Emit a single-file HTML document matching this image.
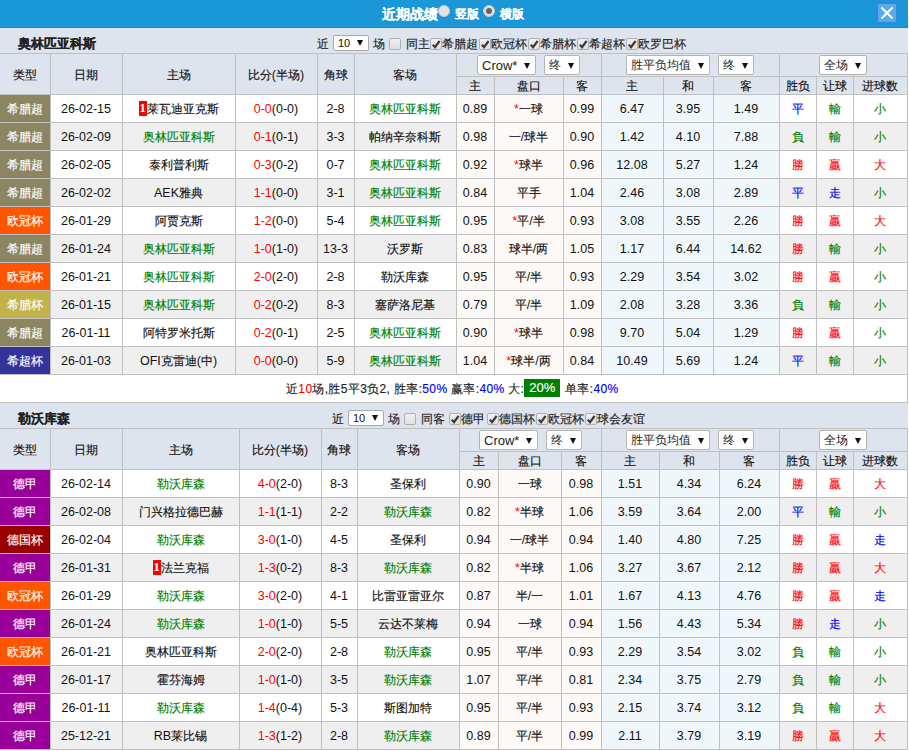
<!DOCTYPE html>
<html><head><meta charset="utf-8"><style>
html,body{margin:0;padding:0;background:#fff;}
body{width:909px;height:751px;overflow:hidden;position:relative;font-family:"Liberation Sans",sans-serif;font-size:12px;color:#111;}
body>div,body>svg{position:absolute;}
.n{font-size:12.5px;-webkit-text-stroke:0;}
.t{-webkit-text-stroke:0.15px currentColor;}
.t{text-align:center;white-space:nowrap;overflow:visible;}
.rk{font-style:normal;background:#ff0000;color:#fff;display:inline-block;width:8px;height:15px;line-height:15px;text-align:center;font-weight:bold;vertical-align:middle;margin-top:-2px;font-family:"Liberation Serif",serif;font-size:12px;}
.sel{height:18px;line-height:19px;background:#fff;border:1px solid #b4b4b4;border-radius:2px;font-size:12px;color:#222;white-space:nowrap;}
.sel span{position:absolute;left:4px;top:0;}
.tri{position:absolute;right:5px;top:7px;width:0;height:0;border-left:3.5px solid transparent;border-right:3.5px solid transparent;border-top:6px solid #111;}
.ssel{position:absolute;width:34px;height:14px;line-height:15px;background:#fff;border:1px solid #a9a9a9;border-radius:2px;font-size:11px;color:#111;white-space:nowrap;}
.ssel span{position:absolute;left:4px;top:0;}
.ssel .tri{right:5px;top:4px;}
.cb{width:10px;height:10px;border:1px solid #b0b0b0;border-radius:2px;background:linear-gradient(#f0f0f0,#e0e0e0);}
.cb svg{position:absolute;left:0;top:0;}
.radio{width:12px;height:12px;border-radius:50%;background:#e2e2e2;border:1px solid #c8c8c8;box-sizing:border-box;}
.radio.on i{position:absolute;left:2px;top:2px;width:6px;height:6px;border-radius:50%;background:#666;}
.big{background:#008000;color:#fff;padding:1px 5px 2px 5px;font-size:13px;display:inline-block;line-height:15px;letter-spacing:0;margin:0 1px 0 0;position:relative;top:-1px;}
</style></head><body>
<div style="left:0px;top:0px;width:908px;height:27px;background:#1b96d6;"></div>
<div style="left:0px;top:27px;width:908px;height:1px;background:#0a8dd3;"></div>
<div style="left:0px;top:28px;width:908px;height:1px;background:#e6e9ee;"></div>
<div class="t" style="left:382px;top:1px;width:60px;height:27px;line-height:27px;font-weight:bold;font-size:14px;color:#fff;text-align:left;">近期战绩</div>
<div class="radio" style="left:438px;top:5px"></div>
<div class="t" style="left:455px;top:1px;width:30px;height:27px;line-height:27px;color:#fff;text-align:left;font-weight:bold;">竖版</div>
<div class="radio on" style="left:483px;top:5px"><i></i></div>
<div class="t" style="left:500px;top:1px;width:30px;height:27px;line-height:27px;color:#fff;text-align:left;font-weight:bold;">横版</div>
<div style="left:876px;top:2px;width:22px;height:22px;background:#2d8ae2;"></div>
<div style="left:878px;top:4px;width:18px;height:18px;background:#5aaae9;"></div>
<svg style="position:absolute;left:876px;top:2px" width="22" height="22" viewBox="0 0 22 22"><path d="M5.5 5.5 L16.5 16.5 M16.5 5.5 L5.5 16.5" stroke="#fff" stroke-width="2" fill="none"/></svg>
<div style="left:0px;top:28px;width:908px;height:25px;background:#dee4ed;"></div>
<div class="t" style="left:18px;top:31px;width:200px;height:25px;line-height:25px;font-weight:bold;font-size:13px;color:#222;text-align:left;">奥林匹亚科斯</div>
<div class="t" style="left:317px;top:32px;width:16px;height:25px;line-height:25px;text-align:left;color:#222;">近</div>
<div class="ssel" style="left:333px;top:35px"><span>10</span><i class="tri"></i></div>
<div class="t" style="left:373px;top:32px;width:16px;height:25px;line-height:25px;text-align:left;color:#222;">场</div>
<div class="cb" style="left:389px;top:38px"></div>
<div class="t" style="left:406px;top:32px;width:28px;height:25px;line-height:25px;text-align:left;color:#222;">同主</div>
<div class="cb ck" style="left:430px;top:38px"><svg width="11" height="11" viewBox="0 0 11 11"><path d="M1.8 5.6 L4.0 8.2 L8.6 2.0" stroke="#3a3a3a" stroke-width="2.2" fill="none"/></svg></div>
<div class="t" style="left:442px;top:32px;width:40px;height:25px;line-height:25px;text-align:left;color:#222;">希腊超</div>
<div class="cb ck" style="left:479px;top:38px"><svg width="11" height="11" viewBox="0 0 11 11"><path d="M1.8 5.6 L4.0 8.2 L8.6 2.0" stroke="#3a3a3a" stroke-width="2.2" fill="none"/></svg></div>
<div class="t" style="left:491px;top:32px;width:40px;height:25px;line-height:25px;text-align:left;color:#222;">欧冠杯</div>
<div class="cb ck" style="left:528px;top:38px"><svg width="11" height="11" viewBox="0 0 11 11"><path d="M1.8 5.6 L4.0 8.2 L8.6 2.0" stroke="#3a3a3a" stroke-width="2.2" fill="none"/></svg></div>
<div class="t" style="left:540px;top:32px;width:40px;height:25px;line-height:25px;text-align:left;color:#222;">希腊杯</div>
<div class="cb ck" style="left:577px;top:38px"><svg width="11" height="11" viewBox="0 0 11 11"><path d="M1.8 5.6 L4.0 8.2 L8.6 2.0" stroke="#3a3a3a" stroke-width="2.2" fill="none"/></svg></div>
<div class="t" style="left:589px;top:32px;width:40px;height:25px;line-height:25px;text-align:left;color:#222;">希超杯</div>
<div class="cb ck" style="left:626px;top:38px"><svg width="11" height="11" viewBox="0 0 11 11"><path d="M1.8 5.6 L4.0 8.2 L8.6 2.0" stroke="#3a3a3a" stroke-width="2.2" fill="none"/></svg></div>
<div class="t" style="left:638px;top:32px;width:52px;height:25px;line-height:25px;text-align:left;color:#222;">欧罗巴杯</div>
<div style="left:0px;top:53px;width:908px;height:41px;background:#dee4ed;"></div>
<div style="left:0px;top:53px;width:908px;height:1px;background:#c0c0c0;"></div>
<div style="left:0px;top:94px;width:908px;height:1px;background:#c0c0c0;"></div>
<div style="left:50px;top:53px;width:1px;height:41px;background:#c0c0c0;"></div>
<div style="left:122px;top:53px;width:1px;height:41px;background:#c0c0c0;"></div>
<div style="left:235px;top:53px;width:1px;height:41px;background:#c0c0c0;"></div>
<div style="left:317px;top:53px;width:1px;height:41px;background:#c0c0c0;"></div>
<div style="left:354px;top:53px;width:1px;height:41px;background:#c0c0c0;"></div>
<div style="left:456px;top:53px;width:1px;height:41px;background:#c0c0c0;"></div>
<div style="left:601px;top:53px;width:1px;height:41px;background:#c0c0c0;"></div>
<div style="left:779px;top:53px;width:1px;height:41px;background:#c0c0c0;"></div>
<div style="left:456px;top:76px;width:452px;height:1px;background:#c0c0c0;"></div>
<div style="left:494px;top:76px;width:1px;height:18px;background:#c0c0c0;"></div>
<div style="left:563px;top:76px;width:1px;height:18px;background:#c0c0c0;"></div>
<div style="left:663px;top:76px;width:1px;height:18px;background:#c0c0c0;"></div>
<div style="left:713px;top:76px;width:1px;height:18px;background:#c0c0c0;"></div>
<div style="left:816px;top:76px;width:1px;height:18px;background:#c0c0c0;"></div>
<div style="left:853px;top:76px;width:1px;height:18px;background:#c0c0c0;"></div>
<div style="left:907px;top:53px;width:1px;height:42px;background:#c0c0c0;"></div>
<div class="t" style="left:0px;top:55px;width:50px;height:40px;line-height:40px;">类型</div>
<div class="t" style="left:50px;top:55px;width:72px;height:40px;line-height:40px;">日期</div>
<div class="t" style="left:122px;top:55px;width:113px;height:40px;line-height:40px;">主场</div>
<div class="t" style="left:235px;top:55px;width:82px;height:40px;line-height:40px;">比分<span class="n">(</span>半场<span class="n">)</span></div>
<div class="t" style="left:317px;top:55px;width:37px;height:40px;line-height:40px;">角球</div>
<div class="t" style="left:354px;top:55px;width:102px;height:40px;line-height:40px;">客场</div>
<div class="t" style="left:456px;top:78px;width:38px;height:17px;line-height:17px;">主</div>
<div class="t" style="left:494px;top:78px;width:69px;height:17px;line-height:17px;">盘口</div>
<div class="t" style="left:563px;top:78px;width:38px;height:17px;line-height:17px;">客</div>
<div class="t" style="left:601px;top:78px;width:62px;height:17px;line-height:17px;">主</div>
<div class="t" style="left:663px;top:78px;width:50px;height:17px;line-height:17px;">和</div>
<div class="t" style="left:713px;top:78px;width:66px;height:17px;line-height:17px;">客</div>
<div class="t" style="left:779px;top:78px;width:37px;height:17px;line-height:17px;">胜负</div>
<div class="t" style="left:816px;top:78px;width:37px;height:17px;line-height:17px;">让球</div>
<div class="t" style="left:853px;top:78px;width:54px;height:17px;line-height:17px;">进球数</div>
<div class="sel" style="left:477px;top:55px;width:57px;font-size:13px;"><span>Crow*</span><i class="tri"></i></div>
<div class="sel" style="left:544px;top:55px;width:34px;"><span>终</span><i class="tri"></i></div>
<div class="sel" style="left:626px;top:55px;width:82px;"><span>胜平负均值</span><i class="tri"></i></div>
<div class="sel" style="left:718px;top:55px;width:34px;"><span>终</span><i class="tri"></i></div>
<div class="sel" style="left:819px;top:55px;width:46px;"><span>全场</span><i class="tri"></i></div>
<div style="left:0px;top:95px;width:908px;height:27px;background:#ffffff;"></div>
<div style="left:457px;top:95px;width:144px;height:27px;background:#fdf9f6;"></div>
<div style="left:602px;top:95px;width:177px;height:27px;background:#eff7fb;"></div>
<div style="left:0px;top:95px;width:50px;height:27px;background:#8b8661;"></div>
<div class="t" style="left:0px;top:96px;width:50px;height:27px;line-height:27px;color:#fff;">希腊超</div>
<div class="t" style="left:50px;top:96px;width:72px;height:27px;line-height:27px;"><span class="n">26-02-15</span></div>
<div class="t" style="left:122px;top:96px;width:113px;height:27px;line-height:27px;"><i class="rk"><span class="n">1</span></i>莱瓦迪亚克斯</div>
<div class="t" style="left:235px;top:96px;width:82px;height:27px;line-height:27px;"><span style="color:#ff0000"><span class="n">0-0</span></span><span class="n">(0-0)</span></div>
<div class="t" style="left:317px;top:96px;width:37px;height:27px;line-height:27px;"><span class="n">2-8</span></div>
<div class="t" style="left:354px;top:96px;width:102px;height:27px;line-height:27px;"><span style="color:#008000">奥林匹亚科斯</span></div>
<div class="t" style="left:456px;top:96px;width:38px;height:27px;line-height:27px;"><span class="n">0.89</span></div>
<div class="t" style="left:494px;top:96px;width:69px;height:27px;line-height:27px;"><span style="color:#ff0000"><span class="n">*</span></span>一球</div>
<div class="t" style="left:563px;top:96px;width:38px;height:27px;line-height:27px;"><span class="n">0.99</span></div>
<div class="t" style="left:601px;top:96px;width:62px;height:27px;line-height:27px;"><span class="n">6.47</span></div>
<div class="t" style="left:663px;top:96px;width:50px;height:27px;line-height:27px;"><span class="n">3.95</span></div>
<div class="t" style="left:713px;top:96px;width:66px;height:27px;line-height:27px;"><span class="n">1.49</span></div>
<div class="t" style="left:779px;top:96px;width:37px;height:27px;line-height:27px;"><span style="color:#0000ff">平</span></div>
<div class="t" style="left:816px;top:96px;width:37px;height:27px;line-height:27px;"><span style="color:#008000">輸</span></div>
<div class="t" style="left:853px;top:96px;width:54px;height:27px;line-height:27px;"><span style="color:#008000">小</span></div>
<div style="left:0px;top:122px;width:908px;height:1px;background:#c0c0c0;"></div>
<div style="left:50px;top:95px;width:1px;height:27px;background:#c0c0c0;"></div>
<div style="left:122px;top:95px;width:1px;height:27px;background:#c0c0c0;"></div>
<div style="left:235px;top:95px;width:1px;height:27px;background:#c0c0c0;"></div>
<div style="left:317px;top:95px;width:1px;height:27px;background:#c0c0c0;"></div>
<div style="left:354px;top:95px;width:1px;height:27px;background:#c0c0c0;"></div>
<div style="left:456px;top:95px;width:1px;height:27px;background:#c0c0c0;"></div>
<div style="left:494px;top:95px;width:1px;height:27px;background:#c0c0c0;"></div>
<div style="left:563px;top:95px;width:1px;height:27px;background:#c0c0c0;"></div>
<div style="left:601px;top:95px;width:1px;height:27px;background:#c0c0c0;"></div>
<div style="left:663px;top:95px;width:1px;height:27px;background:#c0c0c0;"></div>
<div style="left:713px;top:95px;width:1px;height:27px;background:#c0c0c0;"></div>
<div style="left:779px;top:95px;width:1px;height:27px;background:#c0c0c0;"></div>
<div style="left:816px;top:95px;width:1px;height:27px;background:#c0c0c0;"></div>
<div style="left:853px;top:95px;width:1px;height:27px;background:#c0c0c0;"></div>
<div style="left:907px;top:95px;width:1px;height:27px;background:#c0c0c0;"></div>
<div style="left:0px;top:123px;width:908px;height:27px;background:#efefef;"></div>
<div style="left:457px;top:123px;width:144px;height:27px;background:#fdf9f6;"></div>
<div style="left:602px;top:123px;width:177px;height:27px;background:#eff7fb;"></div>
<div style="left:0px;top:123px;width:50px;height:27px;background:#8b8661;"></div>
<div class="t" style="left:0px;top:124px;width:50px;height:27px;line-height:27px;color:#fff;">希腊超</div>
<div class="t" style="left:50px;top:124px;width:72px;height:27px;line-height:27px;"><span class="n">26-02-09</span></div>
<div class="t" style="left:122px;top:124px;width:113px;height:27px;line-height:27px;"><span style="color:#008000">奥林匹亚科斯</span></div>
<div class="t" style="left:235px;top:124px;width:82px;height:27px;line-height:27px;"><span style="color:#ff0000"><span class="n">0-1</span></span><span class="n">(0-1)</span></div>
<div class="t" style="left:317px;top:124px;width:37px;height:27px;line-height:27px;"><span class="n">3-3</span></div>
<div class="t" style="left:354px;top:124px;width:102px;height:27px;line-height:27px;">帕纳辛奈科斯</div>
<div class="t" style="left:456px;top:124px;width:38px;height:27px;line-height:27px;"><span class="n">0.98</span></div>
<div class="t" style="left:494px;top:124px;width:69px;height:27px;line-height:27px;">一<span class="n">/</span>球半</div>
<div class="t" style="left:563px;top:124px;width:38px;height:27px;line-height:27px;"><span class="n">0.90</span></div>
<div class="t" style="left:601px;top:124px;width:62px;height:27px;line-height:27px;"><span class="n">1.42</span></div>
<div class="t" style="left:663px;top:124px;width:50px;height:27px;line-height:27px;"><span class="n">4.10</span></div>
<div class="t" style="left:713px;top:124px;width:66px;height:27px;line-height:27px;"><span class="n">7.88</span></div>
<div class="t" style="left:779px;top:124px;width:37px;height:27px;line-height:27px;"><span style="color:#008000">負</span></div>
<div class="t" style="left:816px;top:124px;width:37px;height:27px;line-height:27px;"><span style="color:#008000">輸</span></div>
<div class="t" style="left:853px;top:124px;width:54px;height:27px;line-height:27px;"><span style="color:#008000">小</span></div>
<div style="left:0px;top:150px;width:908px;height:1px;background:#c0c0c0;"></div>
<div style="left:50px;top:123px;width:1px;height:27px;background:#c0c0c0;"></div>
<div style="left:122px;top:123px;width:1px;height:27px;background:#c0c0c0;"></div>
<div style="left:235px;top:123px;width:1px;height:27px;background:#c0c0c0;"></div>
<div style="left:317px;top:123px;width:1px;height:27px;background:#c0c0c0;"></div>
<div style="left:354px;top:123px;width:1px;height:27px;background:#c0c0c0;"></div>
<div style="left:456px;top:123px;width:1px;height:27px;background:#c0c0c0;"></div>
<div style="left:494px;top:123px;width:1px;height:27px;background:#c0c0c0;"></div>
<div style="left:563px;top:123px;width:1px;height:27px;background:#c0c0c0;"></div>
<div style="left:601px;top:123px;width:1px;height:27px;background:#c0c0c0;"></div>
<div style="left:663px;top:123px;width:1px;height:27px;background:#c0c0c0;"></div>
<div style="left:713px;top:123px;width:1px;height:27px;background:#c0c0c0;"></div>
<div style="left:779px;top:123px;width:1px;height:27px;background:#c0c0c0;"></div>
<div style="left:816px;top:123px;width:1px;height:27px;background:#c0c0c0;"></div>
<div style="left:853px;top:123px;width:1px;height:27px;background:#c0c0c0;"></div>
<div style="left:907px;top:123px;width:1px;height:27px;background:#c0c0c0;"></div>
<div style="left:0px;top:151px;width:908px;height:27px;background:#ffffff;"></div>
<div style="left:457px;top:151px;width:144px;height:27px;background:#fdf9f6;"></div>
<div style="left:602px;top:151px;width:177px;height:27px;background:#eff7fb;"></div>
<div style="left:0px;top:151px;width:50px;height:27px;background:#8b8661;"></div>
<div class="t" style="left:0px;top:152px;width:50px;height:27px;line-height:27px;color:#fff;">希腊超</div>
<div class="t" style="left:50px;top:152px;width:72px;height:27px;line-height:27px;"><span class="n">26-02-05</span></div>
<div class="t" style="left:122px;top:152px;width:113px;height:27px;line-height:27px;">泰利普利斯</div>
<div class="t" style="left:235px;top:152px;width:82px;height:27px;line-height:27px;"><span style="color:#ff0000"><span class="n">0-3</span></span><span class="n">(0-2)</span></div>
<div class="t" style="left:317px;top:152px;width:37px;height:27px;line-height:27px;"><span class="n">0-7</span></div>
<div class="t" style="left:354px;top:152px;width:102px;height:27px;line-height:27px;"><span style="color:#008000">奥林匹亚科斯</span></div>
<div class="t" style="left:456px;top:152px;width:38px;height:27px;line-height:27px;"><span class="n">0.92</span></div>
<div class="t" style="left:494px;top:152px;width:69px;height:27px;line-height:27px;"><span style="color:#ff0000"><span class="n">*</span></span>球半</div>
<div class="t" style="left:563px;top:152px;width:38px;height:27px;line-height:27px;"><span class="n">0.96</span></div>
<div class="t" style="left:601px;top:152px;width:62px;height:27px;line-height:27px;"><span class="n">12.08</span></div>
<div class="t" style="left:663px;top:152px;width:50px;height:27px;line-height:27px;"><span class="n">5.27</span></div>
<div class="t" style="left:713px;top:152px;width:66px;height:27px;line-height:27px;"><span class="n">1.24</span></div>
<div class="t" style="left:779px;top:152px;width:37px;height:27px;line-height:27px;"><span style="color:#ff0000">勝</span></div>
<div class="t" style="left:816px;top:152px;width:37px;height:27px;line-height:27px;"><span style="color:#ff0000">贏</span></div>
<div class="t" style="left:853px;top:152px;width:54px;height:27px;line-height:27px;"><span style="color:#ff0000">大</span></div>
<div style="left:0px;top:178px;width:908px;height:1px;background:#c0c0c0;"></div>
<div style="left:50px;top:151px;width:1px;height:27px;background:#c0c0c0;"></div>
<div style="left:122px;top:151px;width:1px;height:27px;background:#c0c0c0;"></div>
<div style="left:235px;top:151px;width:1px;height:27px;background:#c0c0c0;"></div>
<div style="left:317px;top:151px;width:1px;height:27px;background:#c0c0c0;"></div>
<div style="left:354px;top:151px;width:1px;height:27px;background:#c0c0c0;"></div>
<div style="left:456px;top:151px;width:1px;height:27px;background:#c0c0c0;"></div>
<div style="left:494px;top:151px;width:1px;height:27px;background:#c0c0c0;"></div>
<div style="left:563px;top:151px;width:1px;height:27px;background:#c0c0c0;"></div>
<div style="left:601px;top:151px;width:1px;height:27px;background:#c0c0c0;"></div>
<div style="left:663px;top:151px;width:1px;height:27px;background:#c0c0c0;"></div>
<div style="left:713px;top:151px;width:1px;height:27px;background:#c0c0c0;"></div>
<div style="left:779px;top:151px;width:1px;height:27px;background:#c0c0c0;"></div>
<div style="left:816px;top:151px;width:1px;height:27px;background:#c0c0c0;"></div>
<div style="left:853px;top:151px;width:1px;height:27px;background:#c0c0c0;"></div>
<div style="left:907px;top:151px;width:1px;height:27px;background:#c0c0c0;"></div>
<div style="left:0px;top:179px;width:908px;height:27px;background:#efefef;"></div>
<div style="left:457px;top:179px;width:144px;height:27px;background:#fdf9f6;"></div>
<div style="left:602px;top:179px;width:177px;height:27px;background:#eff7fb;"></div>
<div style="left:0px;top:179px;width:50px;height:27px;background:#8b8661;"></div>
<div class="t" style="left:0px;top:180px;width:50px;height:27px;line-height:27px;color:#fff;">希腊超</div>
<div class="t" style="left:50px;top:180px;width:72px;height:27px;line-height:27px;"><span class="n">26-02-02</span></div>
<div class="t" style="left:122px;top:180px;width:113px;height:27px;line-height:27px;"><span class="n">AEK</span>雅典</div>
<div class="t" style="left:235px;top:180px;width:82px;height:27px;line-height:27px;"><span style="color:#ff0000"><span class="n">1-1</span></span><span class="n">(0-0)</span></div>
<div class="t" style="left:317px;top:180px;width:37px;height:27px;line-height:27px;"><span class="n">3-1</span></div>
<div class="t" style="left:354px;top:180px;width:102px;height:27px;line-height:27px;"><span style="color:#008000">奥林匹亚科斯</span></div>
<div class="t" style="left:456px;top:180px;width:38px;height:27px;line-height:27px;"><span class="n">0.84</span></div>
<div class="t" style="left:494px;top:180px;width:69px;height:27px;line-height:27px;">平手</div>
<div class="t" style="left:563px;top:180px;width:38px;height:27px;line-height:27px;"><span class="n">1.04</span></div>
<div class="t" style="left:601px;top:180px;width:62px;height:27px;line-height:27px;"><span class="n">2.46</span></div>
<div class="t" style="left:663px;top:180px;width:50px;height:27px;line-height:27px;"><span class="n">3.08</span></div>
<div class="t" style="left:713px;top:180px;width:66px;height:27px;line-height:27px;"><span class="n">2.89</span></div>
<div class="t" style="left:779px;top:180px;width:37px;height:27px;line-height:27px;"><span style="color:#0000ff">平</span></div>
<div class="t" style="left:816px;top:180px;width:37px;height:27px;line-height:27px;"><span style="color:#0000ff">走</span></div>
<div class="t" style="left:853px;top:180px;width:54px;height:27px;line-height:27px;"><span style="color:#008000">小</span></div>
<div style="left:0px;top:206px;width:908px;height:1px;background:#c0c0c0;"></div>
<div style="left:50px;top:179px;width:1px;height:27px;background:#c0c0c0;"></div>
<div style="left:122px;top:179px;width:1px;height:27px;background:#c0c0c0;"></div>
<div style="left:235px;top:179px;width:1px;height:27px;background:#c0c0c0;"></div>
<div style="left:317px;top:179px;width:1px;height:27px;background:#c0c0c0;"></div>
<div style="left:354px;top:179px;width:1px;height:27px;background:#c0c0c0;"></div>
<div style="left:456px;top:179px;width:1px;height:27px;background:#c0c0c0;"></div>
<div style="left:494px;top:179px;width:1px;height:27px;background:#c0c0c0;"></div>
<div style="left:563px;top:179px;width:1px;height:27px;background:#c0c0c0;"></div>
<div style="left:601px;top:179px;width:1px;height:27px;background:#c0c0c0;"></div>
<div style="left:663px;top:179px;width:1px;height:27px;background:#c0c0c0;"></div>
<div style="left:713px;top:179px;width:1px;height:27px;background:#c0c0c0;"></div>
<div style="left:779px;top:179px;width:1px;height:27px;background:#c0c0c0;"></div>
<div style="left:816px;top:179px;width:1px;height:27px;background:#c0c0c0;"></div>
<div style="left:853px;top:179px;width:1px;height:27px;background:#c0c0c0;"></div>
<div style="left:907px;top:179px;width:1px;height:27px;background:#c0c0c0;"></div>
<div style="left:0px;top:207px;width:908px;height:27px;background:#ffffff;"></div>
<div style="left:457px;top:207px;width:144px;height:27px;background:#fdf9f6;"></div>
<div style="left:602px;top:207px;width:177px;height:27px;background:#eff7fb;"></div>
<div style="left:0px;top:207px;width:50px;height:27px;background:#ff5500;"></div>
<div class="t" style="left:0px;top:208px;width:50px;height:27px;line-height:27px;color:#fff;">欧冠杯</div>
<div class="t" style="left:50px;top:208px;width:72px;height:27px;line-height:27px;"><span class="n">26-01-29</span></div>
<div class="t" style="left:122px;top:208px;width:113px;height:27px;line-height:27px;">阿贾克斯</div>
<div class="t" style="left:235px;top:208px;width:82px;height:27px;line-height:27px;"><span style="color:#ff0000"><span class="n">1-2</span></span><span class="n">(0-0)</span></div>
<div class="t" style="left:317px;top:208px;width:37px;height:27px;line-height:27px;"><span class="n">5-4</span></div>
<div class="t" style="left:354px;top:208px;width:102px;height:27px;line-height:27px;"><span style="color:#008000">奥林匹亚科斯</span></div>
<div class="t" style="left:456px;top:208px;width:38px;height:27px;line-height:27px;"><span class="n">0.95</span></div>
<div class="t" style="left:494px;top:208px;width:69px;height:27px;line-height:27px;"><span style="color:#ff0000"><span class="n">*</span></span>平<span class="n">/</span>半</div>
<div class="t" style="left:563px;top:208px;width:38px;height:27px;line-height:27px;"><span class="n">0.93</span></div>
<div class="t" style="left:601px;top:208px;width:62px;height:27px;line-height:27px;"><span class="n">3.08</span></div>
<div class="t" style="left:663px;top:208px;width:50px;height:27px;line-height:27px;"><span class="n">3.55</span></div>
<div class="t" style="left:713px;top:208px;width:66px;height:27px;line-height:27px;"><span class="n">2.26</span></div>
<div class="t" style="left:779px;top:208px;width:37px;height:27px;line-height:27px;"><span style="color:#ff0000">勝</span></div>
<div class="t" style="left:816px;top:208px;width:37px;height:27px;line-height:27px;"><span style="color:#ff0000">贏</span></div>
<div class="t" style="left:853px;top:208px;width:54px;height:27px;line-height:27px;"><span style="color:#ff0000">大</span></div>
<div style="left:0px;top:234px;width:908px;height:1px;background:#c0c0c0;"></div>
<div style="left:50px;top:207px;width:1px;height:27px;background:#c0c0c0;"></div>
<div style="left:122px;top:207px;width:1px;height:27px;background:#c0c0c0;"></div>
<div style="left:235px;top:207px;width:1px;height:27px;background:#c0c0c0;"></div>
<div style="left:317px;top:207px;width:1px;height:27px;background:#c0c0c0;"></div>
<div style="left:354px;top:207px;width:1px;height:27px;background:#c0c0c0;"></div>
<div style="left:456px;top:207px;width:1px;height:27px;background:#c0c0c0;"></div>
<div style="left:494px;top:207px;width:1px;height:27px;background:#c0c0c0;"></div>
<div style="left:563px;top:207px;width:1px;height:27px;background:#c0c0c0;"></div>
<div style="left:601px;top:207px;width:1px;height:27px;background:#c0c0c0;"></div>
<div style="left:663px;top:207px;width:1px;height:27px;background:#c0c0c0;"></div>
<div style="left:713px;top:207px;width:1px;height:27px;background:#c0c0c0;"></div>
<div style="left:779px;top:207px;width:1px;height:27px;background:#c0c0c0;"></div>
<div style="left:816px;top:207px;width:1px;height:27px;background:#c0c0c0;"></div>
<div style="left:853px;top:207px;width:1px;height:27px;background:#c0c0c0;"></div>
<div style="left:907px;top:207px;width:1px;height:27px;background:#c0c0c0;"></div>
<div style="left:0px;top:235px;width:908px;height:27px;background:#efefef;"></div>
<div style="left:457px;top:235px;width:144px;height:27px;background:#fdf9f6;"></div>
<div style="left:602px;top:235px;width:177px;height:27px;background:#eff7fb;"></div>
<div style="left:0px;top:235px;width:50px;height:27px;background:#8b8661;"></div>
<div class="t" style="left:0px;top:236px;width:50px;height:27px;line-height:27px;color:#fff;">希腊超</div>
<div class="t" style="left:50px;top:236px;width:72px;height:27px;line-height:27px;"><span class="n">26-01-24</span></div>
<div class="t" style="left:122px;top:236px;width:113px;height:27px;line-height:27px;"><span style="color:#008000">奥林匹亚科斯</span></div>
<div class="t" style="left:235px;top:236px;width:82px;height:27px;line-height:27px;"><span style="color:#ff0000"><span class="n">1-0</span></span><span class="n">(1-0)</span></div>
<div class="t" style="left:317px;top:236px;width:37px;height:27px;line-height:27px;"><span class="n">13-3</span></div>
<div class="t" style="left:354px;top:236px;width:102px;height:27px;line-height:27px;">沃罗斯</div>
<div class="t" style="left:456px;top:236px;width:38px;height:27px;line-height:27px;"><span class="n">0.83</span></div>
<div class="t" style="left:494px;top:236px;width:69px;height:27px;line-height:27px;">球半<span class="n">/</span>两</div>
<div class="t" style="left:563px;top:236px;width:38px;height:27px;line-height:27px;"><span class="n">1.05</span></div>
<div class="t" style="left:601px;top:236px;width:62px;height:27px;line-height:27px;"><span class="n">1.17</span></div>
<div class="t" style="left:663px;top:236px;width:50px;height:27px;line-height:27px;"><span class="n">6.44</span></div>
<div class="t" style="left:713px;top:236px;width:66px;height:27px;line-height:27px;"><span class="n">14.62</span></div>
<div class="t" style="left:779px;top:236px;width:37px;height:27px;line-height:27px;"><span style="color:#ff0000">勝</span></div>
<div class="t" style="left:816px;top:236px;width:37px;height:27px;line-height:27px;"><span style="color:#008000">輸</span></div>
<div class="t" style="left:853px;top:236px;width:54px;height:27px;line-height:27px;"><span style="color:#008000">小</span></div>
<div style="left:0px;top:262px;width:908px;height:1px;background:#c0c0c0;"></div>
<div style="left:50px;top:235px;width:1px;height:27px;background:#c0c0c0;"></div>
<div style="left:122px;top:235px;width:1px;height:27px;background:#c0c0c0;"></div>
<div style="left:235px;top:235px;width:1px;height:27px;background:#c0c0c0;"></div>
<div style="left:317px;top:235px;width:1px;height:27px;background:#c0c0c0;"></div>
<div style="left:354px;top:235px;width:1px;height:27px;background:#c0c0c0;"></div>
<div style="left:456px;top:235px;width:1px;height:27px;background:#c0c0c0;"></div>
<div style="left:494px;top:235px;width:1px;height:27px;background:#c0c0c0;"></div>
<div style="left:563px;top:235px;width:1px;height:27px;background:#c0c0c0;"></div>
<div style="left:601px;top:235px;width:1px;height:27px;background:#c0c0c0;"></div>
<div style="left:663px;top:235px;width:1px;height:27px;background:#c0c0c0;"></div>
<div style="left:713px;top:235px;width:1px;height:27px;background:#c0c0c0;"></div>
<div style="left:779px;top:235px;width:1px;height:27px;background:#c0c0c0;"></div>
<div style="left:816px;top:235px;width:1px;height:27px;background:#c0c0c0;"></div>
<div style="left:853px;top:235px;width:1px;height:27px;background:#c0c0c0;"></div>
<div style="left:907px;top:235px;width:1px;height:27px;background:#c0c0c0;"></div>
<div style="left:0px;top:263px;width:908px;height:27px;background:#ffffff;"></div>
<div style="left:457px;top:263px;width:144px;height:27px;background:#fdf9f6;"></div>
<div style="left:602px;top:263px;width:177px;height:27px;background:#eff7fb;"></div>
<div style="left:0px;top:263px;width:50px;height:27px;background:#ff5500;"></div>
<div class="t" style="left:0px;top:264px;width:50px;height:27px;line-height:27px;color:#fff;">欧冠杯</div>
<div class="t" style="left:50px;top:264px;width:72px;height:27px;line-height:27px;"><span class="n">26-01-21</span></div>
<div class="t" style="left:122px;top:264px;width:113px;height:27px;line-height:27px;"><span style="color:#008000">奥林匹亚科斯</span></div>
<div class="t" style="left:235px;top:264px;width:82px;height:27px;line-height:27px;"><span style="color:#ff0000"><span class="n">2-0</span></span><span class="n">(2-0)</span></div>
<div class="t" style="left:317px;top:264px;width:37px;height:27px;line-height:27px;"><span class="n">2-8</span></div>
<div class="t" style="left:354px;top:264px;width:102px;height:27px;line-height:27px;">勒沃库森</div>
<div class="t" style="left:456px;top:264px;width:38px;height:27px;line-height:27px;"><span class="n">0.95</span></div>
<div class="t" style="left:494px;top:264px;width:69px;height:27px;line-height:27px;">平<span class="n">/</span>半</div>
<div class="t" style="left:563px;top:264px;width:38px;height:27px;line-height:27px;"><span class="n">0.93</span></div>
<div class="t" style="left:601px;top:264px;width:62px;height:27px;line-height:27px;"><span class="n">2.29</span></div>
<div class="t" style="left:663px;top:264px;width:50px;height:27px;line-height:27px;"><span class="n">3.54</span></div>
<div class="t" style="left:713px;top:264px;width:66px;height:27px;line-height:27px;"><span class="n">3.02</span></div>
<div class="t" style="left:779px;top:264px;width:37px;height:27px;line-height:27px;"><span style="color:#ff0000">勝</span></div>
<div class="t" style="left:816px;top:264px;width:37px;height:27px;line-height:27px;"><span style="color:#ff0000">贏</span></div>
<div class="t" style="left:853px;top:264px;width:54px;height:27px;line-height:27px;"><span style="color:#008000">小</span></div>
<div style="left:0px;top:290px;width:908px;height:1px;background:#c0c0c0;"></div>
<div style="left:50px;top:263px;width:1px;height:27px;background:#c0c0c0;"></div>
<div style="left:122px;top:263px;width:1px;height:27px;background:#c0c0c0;"></div>
<div style="left:235px;top:263px;width:1px;height:27px;background:#c0c0c0;"></div>
<div style="left:317px;top:263px;width:1px;height:27px;background:#c0c0c0;"></div>
<div style="left:354px;top:263px;width:1px;height:27px;background:#c0c0c0;"></div>
<div style="left:456px;top:263px;width:1px;height:27px;background:#c0c0c0;"></div>
<div style="left:494px;top:263px;width:1px;height:27px;background:#c0c0c0;"></div>
<div style="left:563px;top:263px;width:1px;height:27px;background:#c0c0c0;"></div>
<div style="left:601px;top:263px;width:1px;height:27px;background:#c0c0c0;"></div>
<div style="left:663px;top:263px;width:1px;height:27px;background:#c0c0c0;"></div>
<div style="left:713px;top:263px;width:1px;height:27px;background:#c0c0c0;"></div>
<div style="left:779px;top:263px;width:1px;height:27px;background:#c0c0c0;"></div>
<div style="left:816px;top:263px;width:1px;height:27px;background:#c0c0c0;"></div>
<div style="left:853px;top:263px;width:1px;height:27px;background:#c0c0c0;"></div>
<div style="left:907px;top:263px;width:1px;height:27px;background:#c0c0c0;"></div>
<div style="left:0px;top:291px;width:908px;height:27px;background:#efefef;"></div>
<div style="left:457px;top:291px;width:144px;height:27px;background:#fdf9f6;"></div>
<div style="left:602px;top:291px;width:177px;height:27px;background:#eff7fb;"></div>
<div style="left:0px;top:291px;width:50px;height:27px;background:#c2b24a;"></div>
<div class="t" style="left:0px;top:292px;width:50px;height:27px;line-height:27px;color:#fff;">希腊杯</div>
<div class="t" style="left:50px;top:292px;width:72px;height:27px;line-height:27px;"><span class="n">26-01-15</span></div>
<div class="t" style="left:122px;top:292px;width:113px;height:27px;line-height:27px;"><span style="color:#008000">奥林匹亚科斯</span></div>
<div class="t" style="left:235px;top:292px;width:82px;height:27px;line-height:27px;"><span style="color:#ff0000"><span class="n">0-2</span></span><span class="n">(0-2)</span></div>
<div class="t" style="left:317px;top:292px;width:37px;height:27px;line-height:27px;"><span class="n">8-3</span></div>
<div class="t" style="left:354px;top:292px;width:102px;height:27px;line-height:27px;">塞萨洛尼基</div>
<div class="t" style="left:456px;top:292px;width:38px;height:27px;line-height:27px;"><span class="n">0.79</span></div>
<div class="t" style="left:494px;top:292px;width:69px;height:27px;line-height:27px;">平<span class="n">/</span>半</div>
<div class="t" style="left:563px;top:292px;width:38px;height:27px;line-height:27px;"><span class="n">1.09</span></div>
<div class="t" style="left:601px;top:292px;width:62px;height:27px;line-height:27px;"><span class="n">2.08</span></div>
<div class="t" style="left:663px;top:292px;width:50px;height:27px;line-height:27px;"><span class="n">3.28</span></div>
<div class="t" style="left:713px;top:292px;width:66px;height:27px;line-height:27px;"><span class="n">3.36</span></div>
<div class="t" style="left:779px;top:292px;width:37px;height:27px;line-height:27px;"><span style="color:#008000">負</span></div>
<div class="t" style="left:816px;top:292px;width:37px;height:27px;line-height:27px;"><span style="color:#008000">輸</span></div>
<div class="t" style="left:853px;top:292px;width:54px;height:27px;line-height:27px;"><span style="color:#008000">小</span></div>
<div style="left:0px;top:318px;width:908px;height:1px;background:#c0c0c0;"></div>
<div style="left:50px;top:291px;width:1px;height:27px;background:#c0c0c0;"></div>
<div style="left:122px;top:291px;width:1px;height:27px;background:#c0c0c0;"></div>
<div style="left:235px;top:291px;width:1px;height:27px;background:#c0c0c0;"></div>
<div style="left:317px;top:291px;width:1px;height:27px;background:#c0c0c0;"></div>
<div style="left:354px;top:291px;width:1px;height:27px;background:#c0c0c0;"></div>
<div style="left:456px;top:291px;width:1px;height:27px;background:#c0c0c0;"></div>
<div style="left:494px;top:291px;width:1px;height:27px;background:#c0c0c0;"></div>
<div style="left:563px;top:291px;width:1px;height:27px;background:#c0c0c0;"></div>
<div style="left:601px;top:291px;width:1px;height:27px;background:#c0c0c0;"></div>
<div style="left:663px;top:291px;width:1px;height:27px;background:#c0c0c0;"></div>
<div style="left:713px;top:291px;width:1px;height:27px;background:#c0c0c0;"></div>
<div style="left:779px;top:291px;width:1px;height:27px;background:#c0c0c0;"></div>
<div style="left:816px;top:291px;width:1px;height:27px;background:#c0c0c0;"></div>
<div style="left:853px;top:291px;width:1px;height:27px;background:#c0c0c0;"></div>
<div style="left:907px;top:291px;width:1px;height:27px;background:#c0c0c0;"></div>
<div style="left:0px;top:319px;width:908px;height:27px;background:#ffffff;"></div>
<div style="left:457px;top:319px;width:144px;height:27px;background:#fdf9f6;"></div>
<div style="left:602px;top:319px;width:177px;height:27px;background:#eff7fb;"></div>
<div style="left:0px;top:319px;width:50px;height:27px;background:#8b8661;"></div>
<div class="t" style="left:0px;top:320px;width:50px;height:27px;line-height:27px;color:#fff;">希腊超</div>
<div class="t" style="left:50px;top:320px;width:72px;height:27px;line-height:27px;"><span class="n">26-01-11</span></div>
<div class="t" style="left:122px;top:320px;width:113px;height:27px;line-height:27px;">阿特罗米托斯</div>
<div class="t" style="left:235px;top:320px;width:82px;height:27px;line-height:27px;"><span style="color:#ff0000"><span class="n">0-2</span></span><span class="n">(0-1)</span></div>
<div class="t" style="left:317px;top:320px;width:37px;height:27px;line-height:27px;"><span class="n">2-5</span></div>
<div class="t" style="left:354px;top:320px;width:102px;height:27px;line-height:27px;"><span style="color:#008000">奥林匹亚科斯</span></div>
<div class="t" style="left:456px;top:320px;width:38px;height:27px;line-height:27px;"><span class="n">0.90</span></div>
<div class="t" style="left:494px;top:320px;width:69px;height:27px;line-height:27px;"><span style="color:#ff0000"><span class="n">*</span></span>球半</div>
<div class="t" style="left:563px;top:320px;width:38px;height:27px;line-height:27px;"><span class="n">0.98</span></div>
<div class="t" style="left:601px;top:320px;width:62px;height:27px;line-height:27px;"><span class="n">9.70</span></div>
<div class="t" style="left:663px;top:320px;width:50px;height:27px;line-height:27px;"><span class="n">5.04</span></div>
<div class="t" style="left:713px;top:320px;width:66px;height:27px;line-height:27px;"><span class="n">1.29</span></div>
<div class="t" style="left:779px;top:320px;width:37px;height:27px;line-height:27px;"><span style="color:#ff0000">勝</span></div>
<div class="t" style="left:816px;top:320px;width:37px;height:27px;line-height:27px;"><span style="color:#ff0000">贏</span></div>
<div class="t" style="left:853px;top:320px;width:54px;height:27px;line-height:27px;"><span style="color:#008000">小</span></div>
<div style="left:0px;top:346px;width:908px;height:1px;background:#c0c0c0;"></div>
<div style="left:50px;top:319px;width:1px;height:27px;background:#c0c0c0;"></div>
<div style="left:122px;top:319px;width:1px;height:27px;background:#c0c0c0;"></div>
<div style="left:235px;top:319px;width:1px;height:27px;background:#c0c0c0;"></div>
<div style="left:317px;top:319px;width:1px;height:27px;background:#c0c0c0;"></div>
<div style="left:354px;top:319px;width:1px;height:27px;background:#c0c0c0;"></div>
<div style="left:456px;top:319px;width:1px;height:27px;background:#c0c0c0;"></div>
<div style="left:494px;top:319px;width:1px;height:27px;background:#c0c0c0;"></div>
<div style="left:563px;top:319px;width:1px;height:27px;background:#c0c0c0;"></div>
<div style="left:601px;top:319px;width:1px;height:27px;background:#c0c0c0;"></div>
<div style="left:663px;top:319px;width:1px;height:27px;background:#c0c0c0;"></div>
<div style="left:713px;top:319px;width:1px;height:27px;background:#c0c0c0;"></div>
<div style="left:779px;top:319px;width:1px;height:27px;background:#c0c0c0;"></div>
<div style="left:816px;top:319px;width:1px;height:27px;background:#c0c0c0;"></div>
<div style="left:853px;top:319px;width:1px;height:27px;background:#c0c0c0;"></div>
<div style="left:907px;top:319px;width:1px;height:27px;background:#c0c0c0;"></div>
<div style="left:0px;top:347px;width:908px;height:27px;background:#efefef;"></div>
<div style="left:457px;top:347px;width:144px;height:27px;background:#fdf9f6;"></div>
<div style="left:602px;top:347px;width:177px;height:27px;background:#eff7fb;"></div>
<div style="left:0px;top:347px;width:50px;height:27px;background:#333399;"></div>
<div class="t" style="left:0px;top:348px;width:50px;height:27px;line-height:27px;color:#fff;">希超杯</div>
<div class="t" style="left:50px;top:348px;width:72px;height:27px;line-height:27px;"><span class="n">26-01-03</span></div>
<div class="t" style="left:122px;top:348px;width:113px;height:27px;line-height:27px;"><span class="n">OFI</span>克雷迪<span class="n">(</span>中<span class="n">)</span></div>
<div class="t" style="left:235px;top:348px;width:82px;height:27px;line-height:27px;"><span style="color:#ff0000"><span class="n">0-0</span></span><span class="n">(0-0)</span></div>
<div class="t" style="left:317px;top:348px;width:37px;height:27px;line-height:27px;"><span class="n">5-9</span></div>
<div class="t" style="left:354px;top:348px;width:102px;height:27px;line-height:27px;"><span style="color:#008000">奥林匹亚科斯</span></div>
<div class="t" style="left:456px;top:348px;width:38px;height:27px;line-height:27px;"><span class="n">1.04</span></div>
<div class="t" style="left:494px;top:348px;width:69px;height:27px;line-height:27px;"><span style="color:#ff0000"><span class="n">*</span></span>球半<span class="n">/</span>两</div>
<div class="t" style="left:563px;top:348px;width:38px;height:27px;line-height:27px;"><span class="n">0.84</span></div>
<div class="t" style="left:601px;top:348px;width:62px;height:27px;line-height:27px;"><span class="n">10.49</span></div>
<div class="t" style="left:663px;top:348px;width:50px;height:27px;line-height:27px;"><span class="n">5.69</span></div>
<div class="t" style="left:713px;top:348px;width:66px;height:27px;line-height:27px;"><span class="n">1.24</span></div>
<div class="t" style="left:779px;top:348px;width:37px;height:27px;line-height:27px;"><span style="color:#0000ff">平</span></div>
<div class="t" style="left:816px;top:348px;width:37px;height:27px;line-height:27px;"><span style="color:#008000">輸</span></div>
<div class="t" style="left:853px;top:348px;width:54px;height:27px;line-height:27px;"><span style="color:#008000">小</span></div>
<div style="left:0px;top:374px;width:908px;height:1px;background:#c0c0c0;"></div>
<div style="left:50px;top:347px;width:1px;height:27px;background:#c0c0c0;"></div>
<div style="left:122px;top:347px;width:1px;height:27px;background:#c0c0c0;"></div>
<div style="left:235px;top:347px;width:1px;height:27px;background:#c0c0c0;"></div>
<div style="left:317px;top:347px;width:1px;height:27px;background:#c0c0c0;"></div>
<div style="left:354px;top:347px;width:1px;height:27px;background:#c0c0c0;"></div>
<div style="left:456px;top:347px;width:1px;height:27px;background:#c0c0c0;"></div>
<div style="left:494px;top:347px;width:1px;height:27px;background:#c0c0c0;"></div>
<div style="left:563px;top:347px;width:1px;height:27px;background:#c0c0c0;"></div>
<div style="left:601px;top:347px;width:1px;height:27px;background:#c0c0c0;"></div>
<div style="left:663px;top:347px;width:1px;height:27px;background:#c0c0c0;"></div>
<div style="left:713px;top:347px;width:1px;height:27px;background:#c0c0c0;"></div>
<div style="left:779px;top:347px;width:1px;height:27px;background:#c0c0c0;"></div>
<div style="left:816px;top:347px;width:1px;height:27px;background:#c0c0c0;"></div>
<div style="left:853px;top:347px;width:1px;height:27px;background:#c0c0c0;"></div>
<div style="left:907px;top:347px;width:1px;height:27px;background:#c0c0c0;"></div>
<div style="left:0px;top:375px;width:908px;height:27px;background:#ffffff;"></div>
<div class="t" style="left:286px;top:376px;width:400px;height:27px;line-height:27px;color:#222;letter-spacing:0.35px;text-align:left;">近<span style="color:#ff0000">10</span>场,胜5平3负2, 胜率:<span style="color:#0000ff">50%</span> 赢率:<span style="color:#0000ff">40%</span> 大:<span class="big">20%</span> 单率:<span style="color:#0000ff">40%</span></div>
<div style="left:0px;top:402px;width:908px;height:1px;background:#c0c0c0;"></div>
<div style="left:907px;top:375px;width:1px;height:27px;background:#c0c0c0;"></div>
<div style="left:0px;top:403px;width:908px;height:25px;background:#dee4ed;"></div>
<div class="t" style="left:18px;top:406px;width:200px;height:25px;line-height:25px;font-weight:bold;font-size:13px;color:#222;text-align:left;">勒沃库森</div>
<div class="t" style="left:332px;top:407px;width:16px;height:25px;line-height:25px;text-align:left;color:#222;">近</div>
<div class="ssel" style="left:348px;top:410px"><span>10</span><i class="tri"></i></div>
<div class="t" style="left:388px;top:407px;width:16px;height:25px;line-height:25px;text-align:left;color:#222;">场</div>
<div class="cb" style="left:404px;top:413px"></div>
<div class="t" style="left:421px;top:407px;width:28px;height:25px;line-height:25px;text-align:left;color:#222;">同客</div>
<div class="cb ck" style="left:449px;top:413px"><svg width="11" height="11" viewBox="0 0 11 11"><path d="M1.8 5.6 L4.0 8.2 L8.6 2.0" stroke="#3a3a3a" stroke-width="2.2" fill="none"/></svg></div>
<div class="t" style="left:461px;top:407px;width:28px;height:25px;line-height:25px;text-align:left;color:#222;">德甲</div>
<div class="cb ck" style="left:487px;top:413px"><svg width="11" height="11" viewBox="0 0 11 11"><path d="M1.8 5.6 L4.0 8.2 L8.6 2.0" stroke="#3a3a3a" stroke-width="2.2" fill="none"/></svg></div>
<div class="t" style="left:499px;top:407px;width:40px;height:25px;line-height:25px;text-align:left;color:#222;">德国杯</div>
<div class="cb ck" style="left:536px;top:413px"><svg width="11" height="11" viewBox="0 0 11 11"><path d="M1.8 5.6 L4.0 8.2 L8.6 2.0" stroke="#3a3a3a" stroke-width="2.2" fill="none"/></svg></div>
<div class="t" style="left:548px;top:407px;width:40px;height:25px;line-height:25px;text-align:left;color:#222;">欧冠杯</div>
<div class="cb ck" style="left:585px;top:413px"><svg width="11" height="11" viewBox="0 0 11 11"><path d="M1.8 5.6 L4.0 8.2 L8.6 2.0" stroke="#3a3a3a" stroke-width="2.2" fill="none"/></svg></div>
<div class="t" style="left:597px;top:407px;width:52px;height:25px;line-height:25px;text-align:left;color:#222;">球会友谊</div>
<div style="left:0px;top:428px;width:908px;height:41px;background:#dee4ed;"></div>
<div style="left:0px;top:428px;width:908px;height:1px;background:#c0c0c0;"></div>
<div style="left:0px;top:469px;width:908px;height:1px;background:#c0c0c0;"></div>
<div style="left:50px;top:428px;width:1px;height:41px;background:#c0c0c0;"></div>
<div style="left:122px;top:428px;width:1px;height:41px;background:#c0c0c0;"></div>
<div style="left:239px;top:428px;width:1px;height:41px;background:#c0c0c0;"></div>
<div style="left:321px;top:428px;width:1px;height:41px;background:#c0c0c0;"></div>
<div style="left:357px;top:428px;width:1px;height:41px;background:#c0c0c0;"></div>
<div style="left:459px;top:428px;width:1px;height:41px;background:#c0c0c0;"></div>
<div style="left:601px;top:428px;width:1px;height:41px;background:#c0c0c0;"></div>
<div style="left:779px;top:428px;width:1px;height:41px;background:#c0c0c0;"></div>
<div style="left:459px;top:451px;width:449px;height:1px;background:#c0c0c0;"></div>
<div style="left:498px;top:451px;width:1px;height:18px;background:#c0c0c0;"></div>
<div style="left:561px;top:451px;width:1px;height:18px;background:#c0c0c0;"></div>
<div style="left:659px;top:451px;width:1px;height:18px;background:#c0c0c0;"></div>
<div style="left:719px;top:451px;width:1px;height:18px;background:#c0c0c0;"></div>
<div style="left:816px;top:451px;width:1px;height:18px;background:#c0c0c0;"></div>
<div style="left:853px;top:451px;width:1px;height:18px;background:#c0c0c0;"></div>
<div style="left:907px;top:428px;width:1px;height:42px;background:#c0c0c0;"></div>
<div class="t" style="left:0px;top:430px;width:50px;height:40px;line-height:40px;">类型</div>
<div class="t" style="left:50px;top:430px;width:72px;height:40px;line-height:40px;">日期</div>
<div class="t" style="left:122px;top:430px;width:117px;height:40px;line-height:40px;">主场</div>
<div class="t" style="left:239px;top:430px;width:82px;height:40px;line-height:40px;">比分<span class="n">(</span>半场<span class="n">)</span></div>
<div class="t" style="left:321px;top:430px;width:36px;height:40px;line-height:40px;">角球</div>
<div class="t" style="left:357px;top:430px;width:102px;height:40px;line-height:40px;">客场</div>
<div class="t" style="left:459px;top:453px;width:39px;height:17px;line-height:17px;">主</div>
<div class="t" style="left:498px;top:453px;width:63px;height:17px;line-height:17px;">盘口</div>
<div class="t" style="left:561px;top:453px;width:40px;height:17px;line-height:17px;">客</div>
<div class="t" style="left:601px;top:453px;width:58px;height:17px;line-height:17px;">主</div>
<div class="t" style="left:659px;top:453px;width:60px;height:17px;line-height:17px;">和</div>
<div class="t" style="left:719px;top:453px;width:60px;height:17px;line-height:17px;">客</div>
<div class="t" style="left:779px;top:453px;width:37px;height:17px;line-height:17px;">胜负</div>
<div class="t" style="left:816px;top:453px;width:37px;height:17px;line-height:17px;">让球</div>
<div class="t" style="left:853px;top:453px;width:54px;height:17px;line-height:17px;">进球数</div>
<div class="sel" style="left:479px;top:430px;width:57px;font-size:13px;"><span>Crow*</span><i class="tri"></i></div>
<div class="sel" style="left:546px;top:430px;width:34px;"><span>终</span><i class="tri"></i></div>
<div class="sel" style="left:626px;top:430px;width:82px;"><span>胜平负均值</span><i class="tri"></i></div>
<div class="sel" style="left:718px;top:430px;width:34px;"><span>终</span><i class="tri"></i></div>
<div class="sel" style="left:819px;top:430px;width:46px;"><span>全场</span><i class="tri"></i></div>
<div style="left:0px;top:470px;width:908px;height:27px;background:#ffffff;"></div>
<div style="left:460px;top:470px;width:141px;height:27px;background:#fdf9f6;"></div>
<div style="left:602px;top:470px;width:177px;height:27px;background:#eff7fb;"></div>
<div style="left:0px;top:470px;width:50px;height:27px;background:#990099;"></div>
<div class="t" style="left:0px;top:471px;width:50px;height:27px;line-height:27px;color:#fff;">德甲</div>
<div class="t" style="left:50px;top:471px;width:72px;height:27px;line-height:27px;"><span class="n">26-02-14</span></div>
<div class="t" style="left:122px;top:471px;width:117px;height:27px;line-height:27px;"><span style="color:#008000">勒沃库森</span></div>
<div class="t" style="left:239px;top:471px;width:82px;height:27px;line-height:27px;"><span style="color:#ff0000"><span class="n">4-0</span></span><span class="n">(2-0)</span></div>
<div class="t" style="left:321px;top:471px;width:36px;height:27px;line-height:27px;"><span class="n">8-3</span></div>
<div class="t" style="left:357px;top:471px;width:102px;height:27px;line-height:27px;">圣保利</div>
<div class="t" style="left:459px;top:471px;width:39px;height:27px;line-height:27px;"><span class="n">0.90</span></div>
<div class="t" style="left:498px;top:471px;width:63px;height:27px;line-height:27px;">一球</div>
<div class="t" style="left:561px;top:471px;width:40px;height:27px;line-height:27px;"><span class="n">0.98</span></div>
<div class="t" style="left:601px;top:471px;width:58px;height:27px;line-height:27px;"><span class="n">1.51</span></div>
<div class="t" style="left:659px;top:471px;width:60px;height:27px;line-height:27px;"><span class="n">4.34</span></div>
<div class="t" style="left:719px;top:471px;width:60px;height:27px;line-height:27px;"><span class="n">6.24</span></div>
<div class="t" style="left:779px;top:471px;width:37px;height:27px;line-height:27px;"><span style="color:#ff0000">勝</span></div>
<div class="t" style="left:816px;top:471px;width:37px;height:27px;line-height:27px;"><span style="color:#ff0000">贏</span></div>
<div class="t" style="left:853px;top:471px;width:54px;height:27px;line-height:27px;"><span style="color:#ff0000">大</span></div>
<div style="left:0px;top:497px;width:908px;height:1px;background:#c0c0c0;"></div>
<div style="left:50px;top:470px;width:1px;height:27px;background:#c0c0c0;"></div>
<div style="left:122px;top:470px;width:1px;height:27px;background:#c0c0c0;"></div>
<div style="left:239px;top:470px;width:1px;height:27px;background:#c0c0c0;"></div>
<div style="left:321px;top:470px;width:1px;height:27px;background:#c0c0c0;"></div>
<div style="left:357px;top:470px;width:1px;height:27px;background:#c0c0c0;"></div>
<div style="left:459px;top:470px;width:1px;height:27px;background:#c0c0c0;"></div>
<div style="left:498px;top:470px;width:1px;height:27px;background:#c0c0c0;"></div>
<div style="left:561px;top:470px;width:1px;height:27px;background:#c0c0c0;"></div>
<div style="left:601px;top:470px;width:1px;height:27px;background:#c0c0c0;"></div>
<div style="left:659px;top:470px;width:1px;height:27px;background:#c0c0c0;"></div>
<div style="left:719px;top:470px;width:1px;height:27px;background:#c0c0c0;"></div>
<div style="left:779px;top:470px;width:1px;height:27px;background:#c0c0c0;"></div>
<div style="left:816px;top:470px;width:1px;height:27px;background:#c0c0c0;"></div>
<div style="left:853px;top:470px;width:1px;height:27px;background:#c0c0c0;"></div>
<div style="left:907px;top:470px;width:1px;height:27px;background:#c0c0c0;"></div>
<div style="left:0px;top:498px;width:908px;height:27px;background:#efefef;"></div>
<div style="left:460px;top:498px;width:141px;height:27px;background:#fdf9f6;"></div>
<div style="left:602px;top:498px;width:177px;height:27px;background:#eff7fb;"></div>
<div style="left:0px;top:498px;width:50px;height:27px;background:#990099;"></div>
<div class="t" style="left:0px;top:499px;width:50px;height:27px;line-height:27px;color:#fff;">德甲</div>
<div class="t" style="left:50px;top:499px;width:72px;height:27px;line-height:27px;"><span class="n">26-02-08</span></div>
<div class="t" style="left:122px;top:499px;width:117px;height:27px;line-height:27px;">门兴格拉德巴赫</div>
<div class="t" style="left:239px;top:499px;width:82px;height:27px;line-height:27px;"><span style="color:#ff0000"><span class="n">1-1</span></span><span class="n">(1-1)</span></div>
<div class="t" style="left:321px;top:499px;width:36px;height:27px;line-height:27px;"><span class="n">2-2</span></div>
<div class="t" style="left:357px;top:499px;width:102px;height:27px;line-height:27px;"><span style="color:#008000">勒沃库森</span></div>
<div class="t" style="left:459px;top:499px;width:39px;height:27px;line-height:27px;"><span class="n">0.82</span></div>
<div class="t" style="left:498px;top:499px;width:63px;height:27px;line-height:27px;"><span style="color:#ff0000"><span class="n">*</span></span>半球</div>
<div class="t" style="left:561px;top:499px;width:40px;height:27px;line-height:27px;"><span class="n">1.06</span></div>
<div class="t" style="left:601px;top:499px;width:58px;height:27px;line-height:27px;"><span class="n">3.59</span></div>
<div class="t" style="left:659px;top:499px;width:60px;height:27px;line-height:27px;"><span class="n">3.64</span></div>
<div class="t" style="left:719px;top:499px;width:60px;height:27px;line-height:27px;"><span class="n">2.00</span></div>
<div class="t" style="left:779px;top:499px;width:37px;height:27px;line-height:27px;"><span style="color:#0000ff">平</span></div>
<div class="t" style="left:816px;top:499px;width:37px;height:27px;line-height:27px;"><span style="color:#008000">輸</span></div>
<div class="t" style="left:853px;top:499px;width:54px;height:27px;line-height:27px;"><span style="color:#008000">小</span></div>
<div style="left:0px;top:525px;width:908px;height:1px;background:#c0c0c0;"></div>
<div style="left:50px;top:498px;width:1px;height:27px;background:#c0c0c0;"></div>
<div style="left:122px;top:498px;width:1px;height:27px;background:#c0c0c0;"></div>
<div style="left:239px;top:498px;width:1px;height:27px;background:#c0c0c0;"></div>
<div style="left:321px;top:498px;width:1px;height:27px;background:#c0c0c0;"></div>
<div style="left:357px;top:498px;width:1px;height:27px;background:#c0c0c0;"></div>
<div style="left:459px;top:498px;width:1px;height:27px;background:#c0c0c0;"></div>
<div style="left:498px;top:498px;width:1px;height:27px;background:#c0c0c0;"></div>
<div style="left:561px;top:498px;width:1px;height:27px;background:#c0c0c0;"></div>
<div style="left:601px;top:498px;width:1px;height:27px;background:#c0c0c0;"></div>
<div style="left:659px;top:498px;width:1px;height:27px;background:#c0c0c0;"></div>
<div style="left:719px;top:498px;width:1px;height:27px;background:#c0c0c0;"></div>
<div style="left:779px;top:498px;width:1px;height:27px;background:#c0c0c0;"></div>
<div style="left:816px;top:498px;width:1px;height:27px;background:#c0c0c0;"></div>
<div style="left:853px;top:498px;width:1px;height:27px;background:#c0c0c0;"></div>
<div style="left:907px;top:498px;width:1px;height:27px;background:#c0c0c0;"></div>
<div style="left:0px;top:526px;width:908px;height:27px;background:#ffffff;"></div>
<div style="left:460px;top:526px;width:141px;height:27px;background:#fdf9f6;"></div>
<div style="left:602px;top:526px;width:177px;height:27px;background:#eff7fb;"></div>
<div style="left:0px;top:526px;width:50px;height:27px;background:#990000;"></div>
<div class="t" style="left:0px;top:527px;width:50px;height:27px;line-height:27px;color:#fff;">德国杯</div>
<div class="t" style="left:50px;top:527px;width:72px;height:27px;line-height:27px;"><span class="n">26-02-04</span></div>
<div class="t" style="left:122px;top:527px;width:117px;height:27px;line-height:27px;"><span style="color:#008000">勒沃库森</span></div>
<div class="t" style="left:239px;top:527px;width:82px;height:27px;line-height:27px;"><span style="color:#ff0000"><span class="n">3-0</span></span><span class="n">(1-0)</span></div>
<div class="t" style="left:321px;top:527px;width:36px;height:27px;line-height:27px;"><span class="n">4-5</span></div>
<div class="t" style="left:357px;top:527px;width:102px;height:27px;line-height:27px;">圣保利</div>
<div class="t" style="left:459px;top:527px;width:39px;height:27px;line-height:27px;"><span class="n">0.94</span></div>
<div class="t" style="left:498px;top:527px;width:63px;height:27px;line-height:27px;">一<span class="n">/</span>球半</div>
<div class="t" style="left:561px;top:527px;width:40px;height:27px;line-height:27px;"><span class="n">0.94</span></div>
<div class="t" style="left:601px;top:527px;width:58px;height:27px;line-height:27px;"><span class="n">1.40</span></div>
<div class="t" style="left:659px;top:527px;width:60px;height:27px;line-height:27px;"><span class="n">4.80</span></div>
<div class="t" style="left:719px;top:527px;width:60px;height:27px;line-height:27px;"><span class="n">7.25</span></div>
<div class="t" style="left:779px;top:527px;width:37px;height:27px;line-height:27px;"><span style="color:#ff0000">勝</span></div>
<div class="t" style="left:816px;top:527px;width:37px;height:27px;line-height:27px;"><span style="color:#ff0000">贏</span></div>
<div class="t" style="left:853px;top:527px;width:54px;height:27px;line-height:27px;"><span style="color:#0000ff">走</span></div>
<div style="left:0px;top:553px;width:908px;height:1px;background:#c0c0c0;"></div>
<div style="left:50px;top:526px;width:1px;height:27px;background:#c0c0c0;"></div>
<div style="left:122px;top:526px;width:1px;height:27px;background:#c0c0c0;"></div>
<div style="left:239px;top:526px;width:1px;height:27px;background:#c0c0c0;"></div>
<div style="left:321px;top:526px;width:1px;height:27px;background:#c0c0c0;"></div>
<div style="left:357px;top:526px;width:1px;height:27px;background:#c0c0c0;"></div>
<div style="left:459px;top:526px;width:1px;height:27px;background:#c0c0c0;"></div>
<div style="left:498px;top:526px;width:1px;height:27px;background:#c0c0c0;"></div>
<div style="left:561px;top:526px;width:1px;height:27px;background:#c0c0c0;"></div>
<div style="left:601px;top:526px;width:1px;height:27px;background:#c0c0c0;"></div>
<div style="left:659px;top:526px;width:1px;height:27px;background:#c0c0c0;"></div>
<div style="left:719px;top:526px;width:1px;height:27px;background:#c0c0c0;"></div>
<div style="left:779px;top:526px;width:1px;height:27px;background:#c0c0c0;"></div>
<div style="left:816px;top:526px;width:1px;height:27px;background:#c0c0c0;"></div>
<div style="left:853px;top:526px;width:1px;height:27px;background:#c0c0c0;"></div>
<div style="left:907px;top:526px;width:1px;height:27px;background:#c0c0c0;"></div>
<div style="left:0px;top:554px;width:908px;height:27px;background:#efefef;"></div>
<div style="left:460px;top:554px;width:141px;height:27px;background:#fdf9f6;"></div>
<div style="left:602px;top:554px;width:177px;height:27px;background:#eff7fb;"></div>
<div style="left:0px;top:554px;width:50px;height:27px;background:#990099;"></div>
<div class="t" style="left:0px;top:555px;width:50px;height:27px;line-height:27px;color:#fff;">德甲</div>
<div class="t" style="left:50px;top:555px;width:72px;height:27px;line-height:27px;"><span class="n">26-01-31</span></div>
<div class="t" style="left:122px;top:555px;width:117px;height:27px;line-height:27px;"><i class="rk"><span class="n">1</span></i>法兰克福</div>
<div class="t" style="left:239px;top:555px;width:82px;height:27px;line-height:27px;"><span style="color:#ff0000"><span class="n">1-3</span></span><span class="n">(0-2)</span></div>
<div class="t" style="left:321px;top:555px;width:36px;height:27px;line-height:27px;"><span class="n">8-3</span></div>
<div class="t" style="left:357px;top:555px;width:102px;height:27px;line-height:27px;"><span style="color:#008000">勒沃库森</span></div>
<div class="t" style="left:459px;top:555px;width:39px;height:27px;line-height:27px;"><span class="n">0.82</span></div>
<div class="t" style="left:498px;top:555px;width:63px;height:27px;line-height:27px;"><span style="color:#ff0000"><span class="n">*</span></span>半球</div>
<div class="t" style="left:561px;top:555px;width:40px;height:27px;line-height:27px;"><span class="n">1.06</span></div>
<div class="t" style="left:601px;top:555px;width:58px;height:27px;line-height:27px;"><span class="n">3.27</span></div>
<div class="t" style="left:659px;top:555px;width:60px;height:27px;line-height:27px;"><span class="n">3.67</span></div>
<div class="t" style="left:719px;top:555px;width:60px;height:27px;line-height:27px;"><span class="n">2.12</span></div>
<div class="t" style="left:779px;top:555px;width:37px;height:27px;line-height:27px;"><span style="color:#ff0000">勝</span></div>
<div class="t" style="left:816px;top:555px;width:37px;height:27px;line-height:27px;"><span style="color:#ff0000">贏</span></div>
<div class="t" style="left:853px;top:555px;width:54px;height:27px;line-height:27px;"><span style="color:#ff0000">大</span></div>
<div style="left:0px;top:581px;width:908px;height:1px;background:#c0c0c0;"></div>
<div style="left:50px;top:554px;width:1px;height:27px;background:#c0c0c0;"></div>
<div style="left:122px;top:554px;width:1px;height:27px;background:#c0c0c0;"></div>
<div style="left:239px;top:554px;width:1px;height:27px;background:#c0c0c0;"></div>
<div style="left:321px;top:554px;width:1px;height:27px;background:#c0c0c0;"></div>
<div style="left:357px;top:554px;width:1px;height:27px;background:#c0c0c0;"></div>
<div style="left:459px;top:554px;width:1px;height:27px;background:#c0c0c0;"></div>
<div style="left:498px;top:554px;width:1px;height:27px;background:#c0c0c0;"></div>
<div style="left:561px;top:554px;width:1px;height:27px;background:#c0c0c0;"></div>
<div style="left:601px;top:554px;width:1px;height:27px;background:#c0c0c0;"></div>
<div style="left:659px;top:554px;width:1px;height:27px;background:#c0c0c0;"></div>
<div style="left:719px;top:554px;width:1px;height:27px;background:#c0c0c0;"></div>
<div style="left:779px;top:554px;width:1px;height:27px;background:#c0c0c0;"></div>
<div style="left:816px;top:554px;width:1px;height:27px;background:#c0c0c0;"></div>
<div style="left:853px;top:554px;width:1px;height:27px;background:#c0c0c0;"></div>
<div style="left:907px;top:554px;width:1px;height:27px;background:#c0c0c0;"></div>
<div style="left:0px;top:582px;width:908px;height:27px;background:#ffffff;"></div>
<div style="left:460px;top:582px;width:141px;height:27px;background:#fdf9f6;"></div>
<div style="left:602px;top:582px;width:177px;height:27px;background:#eff7fb;"></div>
<div style="left:0px;top:582px;width:50px;height:27px;background:#ff5500;"></div>
<div class="t" style="left:0px;top:583px;width:50px;height:27px;line-height:27px;color:#fff;">欧冠杯</div>
<div class="t" style="left:50px;top:583px;width:72px;height:27px;line-height:27px;"><span class="n">26-01-29</span></div>
<div class="t" style="left:122px;top:583px;width:117px;height:27px;line-height:27px;"><span style="color:#008000">勒沃库森</span></div>
<div class="t" style="left:239px;top:583px;width:82px;height:27px;line-height:27px;"><span style="color:#ff0000"><span class="n">3-0</span></span><span class="n">(2-0)</span></div>
<div class="t" style="left:321px;top:583px;width:36px;height:27px;line-height:27px;"><span class="n">4-1</span></div>
<div class="t" style="left:357px;top:583px;width:102px;height:27px;line-height:27px;">比雷亚雷亚尔</div>
<div class="t" style="left:459px;top:583px;width:39px;height:27px;line-height:27px;"><span class="n">0.87</span></div>
<div class="t" style="left:498px;top:583px;width:63px;height:27px;line-height:27px;">半<span class="n">/</span>一</div>
<div class="t" style="left:561px;top:583px;width:40px;height:27px;line-height:27px;"><span class="n">1.01</span></div>
<div class="t" style="left:601px;top:583px;width:58px;height:27px;line-height:27px;"><span class="n">1.67</span></div>
<div class="t" style="left:659px;top:583px;width:60px;height:27px;line-height:27px;"><span class="n">4.13</span></div>
<div class="t" style="left:719px;top:583px;width:60px;height:27px;line-height:27px;"><span class="n">4.76</span></div>
<div class="t" style="left:779px;top:583px;width:37px;height:27px;line-height:27px;"><span style="color:#ff0000">勝</span></div>
<div class="t" style="left:816px;top:583px;width:37px;height:27px;line-height:27px;"><span style="color:#ff0000">贏</span></div>
<div class="t" style="left:853px;top:583px;width:54px;height:27px;line-height:27px;"><span style="color:#0000ff">走</span></div>
<div style="left:0px;top:609px;width:908px;height:1px;background:#c0c0c0;"></div>
<div style="left:50px;top:582px;width:1px;height:27px;background:#c0c0c0;"></div>
<div style="left:122px;top:582px;width:1px;height:27px;background:#c0c0c0;"></div>
<div style="left:239px;top:582px;width:1px;height:27px;background:#c0c0c0;"></div>
<div style="left:321px;top:582px;width:1px;height:27px;background:#c0c0c0;"></div>
<div style="left:357px;top:582px;width:1px;height:27px;background:#c0c0c0;"></div>
<div style="left:459px;top:582px;width:1px;height:27px;background:#c0c0c0;"></div>
<div style="left:498px;top:582px;width:1px;height:27px;background:#c0c0c0;"></div>
<div style="left:561px;top:582px;width:1px;height:27px;background:#c0c0c0;"></div>
<div style="left:601px;top:582px;width:1px;height:27px;background:#c0c0c0;"></div>
<div style="left:659px;top:582px;width:1px;height:27px;background:#c0c0c0;"></div>
<div style="left:719px;top:582px;width:1px;height:27px;background:#c0c0c0;"></div>
<div style="left:779px;top:582px;width:1px;height:27px;background:#c0c0c0;"></div>
<div style="left:816px;top:582px;width:1px;height:27px;background:#c0c0c0;"></div>
<div style="left:853px;top:582px;width:1px;height:27px;background:#c0c0c0;"></div>
<div style="left:907px;top:582px;width:1px;height:27px;background:#c0c0c0;"></div>
<div style="left:0px;top:610px;width:908px;height:27px;background:#efefef;"></div>
<div style="left:460px;top:610px;width:141px;height:27px;background:#fdf9f6;"></div>
<div style="left:602px;top:610px;width:177px;height:27px;background:#eff7fb;"></div>
<div style="left:0px;top:610px;width:50px;height:27px;background:#990099;"></div>
<div class="t" style="left:0px;top:611px;width:50px;height:27px;line-height:27px;color:#fff;">德甲</div>
<div class="t" style="left:50px;top:611px;width:72px;height:27px;line-height:27px;"><span class="n">26-01-24</span></div>
<div class="t" style="left:122px;top:611px;width:117px;height:27px;line-height:27px;"><span style="color:#008000">勒沃库森</span></div>
<div class="t" style="left:239px;top:611px;width:82px;height:27px;line-height:27px;"><span style="color:#ff0000"><span class="n">1-0</span></span><span class="n">(1-0)</span></div>
<div class="t" style="left:321px;top:611px;width:36px;height:27px;line-height:27px;"><span class="n">5-5</span></div>
<div class="t" style="left:357px;top:611px;width:102px;height:27px;line-height:27px;">云达不莱梅</div>
<div class="t" style="left:459px;top:611px;width:39px;height:27px;line-height:27px;"><span class="n">0.94</span></div>
<div class="t" style="left:498px;top:611px;width:63px;height:27px;line-height:27px;">一球</div>
<div class="t" style="left:561px;top:611px;width:40px;height:27px;line-height:27px;"><span class="n">0.94</span></div>
<div class="t" style="left:601px;top:611px;width:58px;height:27px;line-height:27px;"><span class="n">1.56</span></div>
<div class="t" style="left:659px;top:611px;width:60px;height:27px;line-height:27px;"><span class="n">4.43</span></div>
<div class="t" style="left:719px;top:611px;width:60px;height:27px;line-height:27px;"><span class="n">5.34</span></div>
<div class="t" style="left:779px;top:611px;width:37px;height:27px;line-height:27px;"><span style="color:#ff0000">勝</span></div>
<div class="t" style="left:816px;top:611px;width:37px;height:27px;line-height:27px;"><span style="color:#0000ff">走</span></div>
<div class="t" style="left:853px;top:611px;width:54px;height:27px;line-height:27px;"><span style="color:#008000">小</span></div>
<div style="left:0px;top:637px;width:908px;height:1px;background:#c0c0c0;"></div>
<div style="left:50px;top:610px;width:1px;height:27px;background:#c0c0c0;"></div>
<div style="left:122px;top:610px;width:1px;height:27px;background:#c0c0c0;"></div>
<div style="left:239px;top:610px;width:1px;height:27px;background:#c0c0c0;"></div>
<div style="left:321px;top:610px;width:1px;height:27px;background:#c0c0c0;"></div>
<div style="left:357px;top:610px;width:1px;height:27px;background:#c0c0c0;"></div>
<div style="left:459px;top:610px;width:1px;height:27px;background:#c0c0c0;"></div>
<div style="left:498px;top:610px;width:1px;height:27px;background:#c0c0c0;"></div>
<div style="left:561px;top:610px;width:1px;height:27px;background:#c0c0c0;"></div>
<div style="left:601px;top:610px;width:1px;height:27px;background:#c0c0c0;"></div>
<div style="left:659px;top:610px;width:1px;height:27px;background:#c0c0c0;"></div>
<div style="left:719px;top:610px;width:1px;height:27px;background:#c0c0c0;"></div>
<div style="left:779px;top:610px;width:1px;height:27px;background:#c0c0c0;"></div>
<div style="left:816px;top:610px;width:1px;height:27px;background:#c0c0c0;"></div>
<div style="left:853px;top:610px;width:1px;height:27px;background:#c0c0c0;"></div>
<div style="left:907px;top:610px;width:1px;height:27px;background:#c0c0c0;"></div>
<div style="left:0px;top:638px;width:908px;height:27px;background:#ffffff;"></div>
<div style="left:460px;top:638px;width:141px;height:27px;background:#fdf9f6;"></div>
<div style="left:602px;top:638px;width:177px;height:27px;background:#eff7fb;"></div>
<div style="left:0px;top:638px;width:50px;height:27px;background:#ff5500;"></div>
<div class="t" style="left:0px;top:639px;width:50px;height:27px;line-height:27px;color:#fff;">欧冠杯</div>
<div class="t" style="left:50px;top:639px;width:72px;height:27px;line-height:27px;"><span class="n">26-01-21</span></div>
<div class="t" style="left:122px;top:639px;width:117px;height:27px;line-height:27px;">奥林匹亚科斯</div>
<div class="t" style="left:239px;top:639px;width:82px;height:27px;line-height:27px;"><span style="color:#ff0000"><span class="n">2-0</span></span><span class="n">(2-0)</span></div>
<div class="t" style="left:321px;top:639px;width:36px;height:27px;line-height:27px;"><span class="n">2-8</span></div>
<div class="t" style="left:357px;top:639px;width:102px;height:27px;line-height:27px;"><span style="color:#008000">勒沃库森</span></div>
<div class="t" style="left:459px;top:639px;width:39px;height:27px;line-height:27px;"><span class="n">0.95</span></div>
<div class="t" style="left:498px;top:639px;width:63px;height:27px;line-height:27px;">平<span class="n">/</span>半</div>
<div class="t" style="left:561px;top:639px;width:40px;height:27px;line-height:27px;"><span class="n">0.93</span></div>
<div class="t" style="left:601px;top:639px;width:58px;height:27px;line-height:27px;"><span class="n">2.29</span></div>
<div class="t" style="left:659px;top:639px;width:60px;height:27px;line-height:27px;"><span class="n">3.54</span></div>
<div class="t" style="left:719px;top:639px;width:60px;height:27px;line-height:27px;"><span class="n">3.02</span></div>
<div class="t" style="left:779px;top:639px;width:37px;height:27px;line-height:27px;"><span style="color:#008000">負</span></div>
<div class="t" style="left:816px;top:639px;width:37px;height:27px;line-height:27px;"><span style="color:#008000">輸</span></div>
<div class="t" style="left:853px;top:639px;width:54px;height:27px;line-height:27px;"><span style="color:#008000">小</span></div>
<div style="left:0px;top:665px;width:908px;height:1px;background:#c0c0c0;"></div>
<div style="left:50px;top:638px;width:1px;height:27px;background:#c0c0c0;"></div>
<div style="left:122px;top:638px;width:1px;height:27px;background:#c0c0c0;"></div>
<div style="left:239px;top:638px;width:1px;height:27px;background:#c0c0c0;"></div>
<div style="left:321px;top:638px;width:1px;height:27px;background:#c0c0c0;"></div>
<div style="left:357px;top:638px;width:1px;height:27px;background:#c0c0c0;"></div>
<div style="left:459px;top:638px;width:1px;height:27px;background:#c0c0c0;"></div>
<div style="left:498px;top:638px;width:1px;height:27px;background:#c0c0c0;"></div>
<div style="left:561px;top:638px;width:1px;height:27px;background:#c0c0c0;"></div>
<div style="left:601px;top:638px;width:1px;height:27px;background:#c0c0c0;"></div>
<div style="left:659px;top:638px;width:1px;height:27px;background:#c0c0c0;"></div>
<div style="left:719px;top:638px;width:1px;height:27px;background:#c0c0c0;"></div>
<div style="left:779px;top:638px;width:1px;height:27px;background:#c0c0c0;"></div>
<div style="left:816px;top:638px;width:1px;height:27px;background:#c0c0c0;"></div>
<div style="left:853px;top:638px;width:1px;height:27px;background:#c0c0c0;"></div>
<div style="left:907px;top:638px;width:1px;height:27px;background:#c0c0c0;"></div>
<div style="left:0px;top:666px;width:908px;height:27px;background:#efefef;"></div>
<div style="left:460px;top:666px;width:141px;height:27px;background:#fdf9f6;"></div>
<div style="left:602px;top:666px;width:177px;height:27px;background:#eff7fb;"></div>
<div style="left:0px;top:666px;width:50px;height:27px;background:#990099;"></div>
<div class="t" style="left:0px;top:667px;width:50px;height:27px;line-height:27px;color:#fff;">德甲</div>
<div class="t" style="left:50px;top:667px;width:72px;height:27px;line-height:27px;"><span class="n">26-01-17</span></div>
<div class="t" style="left:122px;top:667px;width:117px;height:27px;line-height:27px;">霍芬海姆</div>
<div class="t" style="left:239px;top:667px;width:82px;height:27px;line-height:27px;"><span style="color:#ff0000"><span class="n">1-0</span></span><span class="n">(1-0)</span></div>
<div class="t" style="left:321px;top:667px;width:36px;height:27px;line-height:27px;"><span class="n">3-5</span></div>
<div class="t" style="left:357px;top:667px;width:102px;height:27px;line-height:27px;"><span style="color:#008000">勒沃库森</span></div>
<div class="t" style="left:459px;top:667px;width:39px;height:27px;line-height:27px;"><span class="n">1.07</span></div>
<div class="t" style="left:498px;top:667px;width:63px;height:27px;line-height:27px;">平<span class="n">/</span>半</div>
<div class="t" style="left:561px;top:667px;width:40px;height:27px;line-height:27px;"><span class="n">0.81</span></div>
<div class="t" style="left:601px;top:667px;width:58px;height:27px;line-height:27px;"><span class="n">2.34</span></div>
<div class="t" style="left:659px;top:667px;width:60px;height:27px;line-height:27px;"><span class="n">3.75</span></div>
<div class="t" style="left:719px;top:667px;width:60px;height:27px;line-height:27px;"><span class="n">2.79</span></div>
<div class="t" style="left:779px;top:667px;width:37px;height:27px;line-height:27px;"><span style="color:#008000">負</span></div>
<div class="t" style="left:816px;top:667px;width:37px;height:27px;line-height:27px;"><span style="color:#008000">輸</span></div>
<div class="t" style="left:853px;top:667px;width:54px;height:27px;line-height:27px;"><span style="color:#008000">小</span></div>
<div style="left:0px;top:693px;width:908px;height:1px;background:#c0c0c0;"></div>
<div style="left:50px;top:666px;width:1px;height:27px;background:#c0c0c0;"></div>
<div style="left:122px;top:666px;width:1px;height:27px;background:#c0c0c0;"></div>
<div style="left:239px;top:666px;width:1px;height:27px;background:#c0c0c0;"></div>
<div style="left:321px;top:666px;width:1px;height:27px;background:#c0c0c0;"></div>
<div style="left:357px;top:666px;width:1px;height:27px;background:#c0c0c0;"></div>
<div style="left:459px;top:666px;width:1px;height:27px;background:#c0c0c0;"></div>
<div style="left:498px;top:666px;width:1px;height:27px;background:#c0c0c0;"></div>
<div style="left:561px;top:666px;width:1px;height:27px;background:#c0c0c0;"></div>
<div style="left:601px;top:666px;width:1px;height:27px;background:#c0c0c0;"></div>
<div style="left:659px;top:666px;width:1px;height:27px;background:#c0c0c0;"></div>
<div style="left:719px;top:666px;width:1px;height:27px;background:#c0c0c0;"></div>
<div style="left:779px;top:666px;width:1px;height:27px;background:#c0c0c0;"></div>
<div style="left:816px;top:666px;width:1px;height:27px;background:#c0c0c0;"></div>
<div style="left:853px;top:666px;width:1px;height:27px;background:#c0c0c0;"></div>
<div style="left:907px;top:666px;width:1px;height:27px;background:#c0c0c0;"></div>
<div style="left:0px;top:694px;width:908px;height:27px;background:#ffffff;"></div>
<div style="left:460px;top:694px;width:141px;height:27px;background:#fdf9f6;"></div>
<div style="left:602px;top:694px;width:177px;height:27px;background:#eff7fb;"></div>
<div style="left:0px;top:694px;width:50px;height:27px;background:#990099;"></div>
<div class="t" style="left:0px;top:695px;width:50px;height:27px;line-height:27px;color:#fff;">德甲</div>
<div class="t" style="left:50px;top:695px;width:72px;height:27px;line-height:27px;"><span class="n">26-01-11</span></div>
<div class="t" style="left:122px;top:695px;width:117px;height:27px;line-height:27px;"><span style="color:#008000">勒沃库森</span></div>
<div class="t" style="left:239px;top:695px;width:82px;height:27px;line-height:27px;"><span style="color:#ff0000"><span class="n">1-4</span></span><span class="n">(0-4)</span></div>
<div class="t" style="left:321px;top:695px;width:36px;height:27px;line-height:27px;"><span class="n">5-3</span></div>
<div class="t" style="left:357px;top:695px;width:102px;height:27px;line-height:27px;">斯图加特</div>
<div class="t" style="left:459px;top:695px;width:39px;height:27px;line-height:27px;"><span class="n">0.95</span></div>
<div class="t" style="left:498px;top:695px;width:63px;height:27px;line-height:27px;">平<span class="n">/</span>半</div>
<div class="t" style="left:561px;top:695px;width:40px;height:27px;line-height:27px;"><span class="n">0.93</span></div>
<div class="t" style="left:601px;top:695px;width:58px;height:27px;line-height:27px;"><span class="n">2.15</span></div>
<div class="t" style="left:659px;top:695px;width:60px;height:27px;line-height:27px;"><span class="n">3.74</span></div>
<div class="t" style="left:719px;top:695px;width:60px;height:27px;line-height:27px;"><span class="n">3.12</span></div>
<div class="t" style="left:779px;top:695px;width:37px;height:27px;line-height:27px;"><span style="color:#008000">負</span></div>
<div class="t" style="left:816px;top:695px;width:37px;height:27px;line-height:27px;"><span style="color:#008000">輸</span></div>
<div class="t" style="left:853px;top:695px;width:54px;height:27px;line-height:27px;"><span style="color:#ff0000">大</span></div>
<div style="left:0px;top:721px;width:908px;height:1px;background:#c0c0c0;"></div>
<div style="left:50px;top:694px;width:1px;height:27px;background:#c0c0c0;"></div>
<div style="left:122px;top:694px;width:1px;height:27px;background:#c0c0c0;"></div>
<div style="left:239px;top:694px;width:1px;height:27px;background:#c0c0c0;"></div>
<div style="left:321px;top:694px;width:1px;height:27px;background:#c0c0c0;"></div>
<div style="left:357px;top:694px;width:1px;height:27px;background:#c0c0c0;"></div>
<div style="left:459px;top:694px;width:1px;height:27px;background:#c0c0c0;"></div>
<div style="left:498px;top:694px;width:1px;height:27px;background:#c0c0c0;"></div>
<div style="left:561px;top:694px;width:1px;height:27px;background:#c0c0c0;"></div>
<div style="left:601px;top:694px;width:1px;height:27px;background:#c0c0c0;"></div>
<div style="left:659px;top:694px;width:1px;height:27px;background:#c0c0c0;"></div>
<div style="left:719px;top:694px;width:1px;height:27px;background:#c0c0c0;"></div>
<div style="left:779px;top:694px;width:1px;height:27px;background:#c0c0c0;"></div>
<div style="left:816px;top:694px;width:1px;height:27px;background:#c0c0c0;"></div>
<div style="left:853px;top:694px;width:1px;height:27px;background:#c0c0c0;"></div>
<div style="left:907px;top:694px;width:1px;height:27px;background:#c0c0c0;"></div>
<div style="left:0px;top:722px;width:908px;height:27px;background:#efefef;"></div>
<div style="left:460px;top:722px;width:141px;height:27px;background:#fdf9f6;"></div>
<div style="left:602px;top:722px;width:177px;height:27px;background:#eff7fb;"></div>
<div style="left:0px;top:722px;width:50px;height:27px;background:#990099;"></div>
<div class="t" style="left:0px;top:723px;width:50px;height:27px;line-height:27px;color:#fff;">德甲</div>
<div class="t" style="left:50px;top:723px;width:72px;height:27px;line-height:27px;"><span class="n">25-12-21</span></div>
<div class="t" style="left:122px;top:723px;width:117px;height:27px;line-height:27px;"><span class="n">RB</span>莱比锡</div>
<div class="t" style="left:239px;top:723px;width:82px;height:27px;line-height:27px;"><span style="color:#ff0000"><span class="n">1-3</span></span><span class="n">(1-2)</span></div>
<div class="t" style="left:321px;top:723px;width:36px;height:27px;line-height:27px;"><span class="n">2-8</span></div>
<div class="t" style="left:357px;top:723px;width:102px;height:27px;line-height:27px;"><span style="color:#008000">勒沃库森</span></div>
<div class="t" style="left:459px;top:723px;width:39px;height:27px;line-height:27px;"><span class="n">0.89</span></div>
<div class="t" style="left:498px;top:723px;width:63px;height:27px;line-height:27px;">平<span class="n">/</span>半</div>
<div class="t" style="left:561px;top:723px;width:40px;height:27px;line-height:27px;"><span class="n">0.99</span></div>
<div class="t" style="left:601px;top:723px;width:58px;height:27px;line-height:27px;"><span class="n">2.11</span></div>
<div class="t" style="left:659px;top:723px;width:60px;height:27px;line-height:27px;"><span class="n">3.79</span></div>
<div class="t" style="left:719px;top:723px;width:60px;height:27px;line-height:27px;"><span class="n">3.19</span></div>
<div class="t" style="left:779px;top:723px;width:37px;height:27px;line-height:27px;"><span style="color:#ff0000">勝</span></div>
<div class="t" style="left:816px;top:723px;width:37px;height:27px;line-height:27px;"><span style="color:#ff0000">贏</span></div>
<div class="t" style="left:853px;top:723px;width:54px;height:27px;line-height:27px;"><span style="color:#ff0000">大</span></div>
<div style="left:0px;top:749px;width:908px;height:1px;background:#c0c0c0;"></div>
<div style="left:50px;top:722px;width:1px;height:27px;background:#c0c0c0;"></div>
<div style="left:122px;top:722px;width:1px;height:27px;background:#c0c0c0;"></div>
<div style="left:239px;top:722px;width:1px;height:27px;background:#c0c0c0;"></div>
<div style="left:321px;top:722px;width:1px;height:27px;background:#c0c0c0;"></div>
<div style="left:357px;top:722px;width:1px;height:27px;background:#c0c0c0;"></div>
<div style="left:459px;top:722px;width:1px;height:27px;background:#c0c0c0;"></div>
<div style="left:498px;top:722px;width:1px;height:27px;background:#c0c0c0;"></div>
<div style="left:561px;top:722px;width:1px;height:27px;background:#c0c0c0;"></div>
<div style="left:601px;top:722px;width:1px;height:27px;background:#c0c0c0;"></div>
<div style="left:659px;top:722px;width:1px;height:27px;background:#c0c0c0;"></div>
<div style="left:719px;top:722px;width:1px;height:27px;background:#c0c0c0;"></div>
<div style="left:779px;top:722px;width:1px;height:27px;background:#c0c0c0;"></div>
<div style="left:816px;top:722px;width:1px;height:27px;background:#c0c0c0;"></div>
<div style="left:853px;top:722px;width:1px;height:27px;background:#c0c0c0;"></div>
<div style="left:907px;top:722px;width:1px;height:27px;background:#c0c0c0;"></div>
</body></html>
